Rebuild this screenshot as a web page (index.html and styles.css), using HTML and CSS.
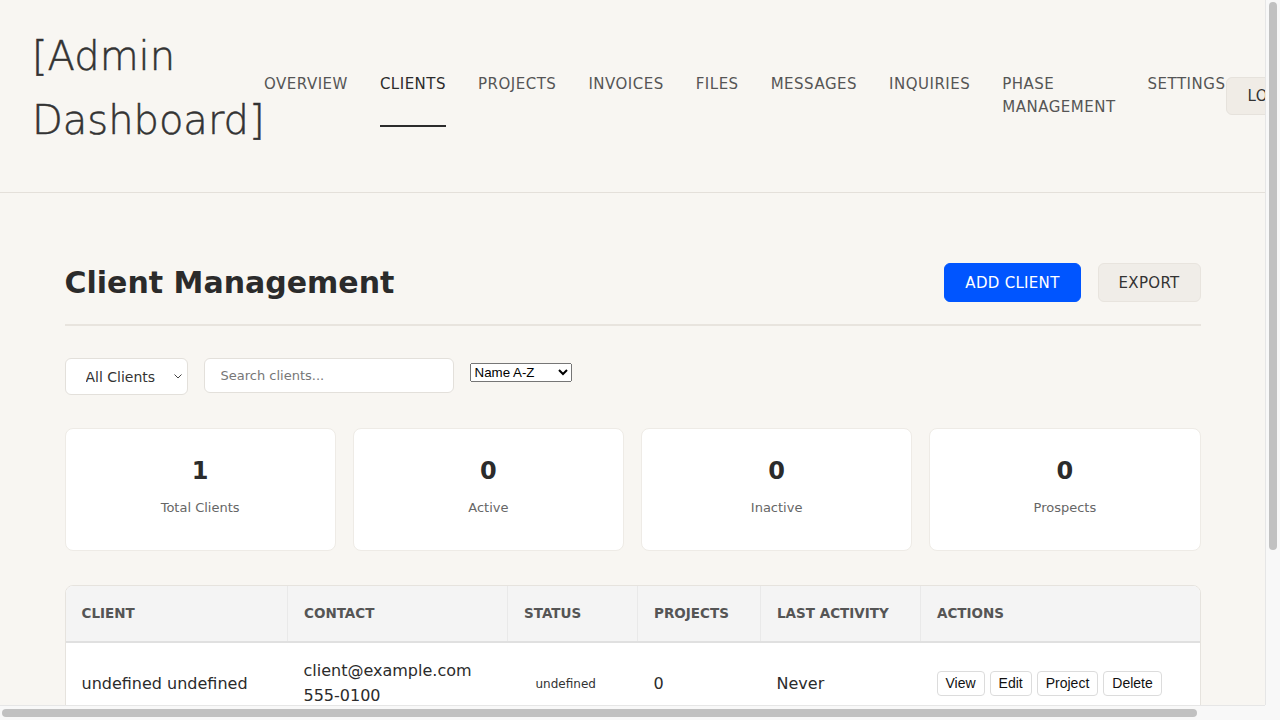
FILE: index.html
```html
<!DOCTYPE html>
<html lang="en">
<head>
<meta charset="utf-8">
<title>Admin Dashboard - Clients</title>
<link rel="stylesheet" href="styles.css">
</head>
<body>
<div class="viewport">
  <header class="site-header">
    <div class="logo">[Admin Dashboard]</div>
    <nav class="main-nav">
      <a class="nav-link" href="#">Overview</a>
      <a class="nav-link nav-link--active" href="#">Clients</a>
      <a class="nav-link" href="#">Projects</a>
      <a class="nav-link" href="#">Invoices</a>
      <a class="nav-link" href="#">Files</a>
      <a class="nav-link" href="#">Messages</a>
      <a class="nav-link" href="#">Inquiries</a>
      <a class="nav-link nav-link--wrap" href="#">Phase Management</a>
      <a class="nav-link" href="#">Settings</a>
    </nav>
    <button class="logout-btn" type="button">Logout</button>
  </header>

  <main class="page">
    <div class="page-head">
      <h1 class="page-title">Client Management</h1>
      <div class="head-actions">
        <button class="btn btn-primary" type="button">Add Client</button>
        <button class="btn btn-secondary" type="button">Export</button>
      </div>
    </div>

    <div class="filters">
      <div class="select-wrap">
        <select class="filter-select">
          <option>All Clients</option>
          <option>Active</option>
          <option>Inactive</option>
          <option>Prospects</option>
        </select>
        <svg class="select-chevron" width="8" height="5" viewBox="0 0 8 5" aria-hidden="true"><path d="M0.5 0.5 L4 4 L7.5 0.5" fill="none" stroke="#444" stroke-width="1"/></svg>
      </div>
      <input class="search-input" type="text" placeholder="Search clients...">
      <select class="sort-select">
        <option>Name A-Z</option>
        <option>Name Z-A</option>
        <option>Newest First</option>
      </select>
    </div>

    <div class="stats">
      <div class="stat-card"><div class="stat-value">1</div><div class="stat-label">Total Clients</div></div>
      <div class="stat-card"><div class="stat-value">0</div><div class="stat-label">Active</div></div>
      <div class="stat-card"><div class="stat-value">0</div><div class="stat-label">Inactive</div></div>
      <div class="stat-card"><div class="stat-value">0</div><div class="stat-label">Prospects</div></div>
    </div>

    <div class="table-wrap">
      <table class="clients-table">
        <colgroup>
          <col class="col-client">
          <col class="col-contact">
          <col class="col-status">
          <col class="col-projects">
          <col class="col-activity">
          <col class="col-actions">
        </colgroup>
        <thead>
          <tr>
            <th>Client</th>
            <th>Contact</th>
            <th>Status</th>
            <th>Projects</th>
            <th>Last Activity</th>
            <th>Actions</th>
          </tr>
        </thead>
        <tbody>
          <tr>
            <td class="cell-name">undefined undefined</td>
            <td class="cell-contact">client@example.com<br>555-0100</td>
            <td><span class="status-badge">undefined</span></td>
            <td class="cell-muted">0</td>
            <td class="cell-muted">Never</td>
            <td>
              <div class="row-actions">
                <button class="action-btn" type="button">View</button>
                <button class="action-btn" type="button">Edit</button>
                <button class="action-btn" type="button">Project</button>
                <button class="action-btn" type="button">Delete</button>
              </div>
            </td>
          </tr>
        </tbody>
      </table>
    </div>
  </main>
</div>
<div class="vscroll"><div class="vscroll-thumb"></div></div>
<div class="hscroll"><div class="hscroll-thumb"></div></div>
<div class="scroll-corner"></div>
</body>
</html>
```

FILE: styles.css
```css
html {
  overflow: hidden;
}

body {
  margin: 0;
  height: 100vh;
  display: grid;
  grid-template-columns: 1fr 15px;
  grid-template-rows: 1fr 15px;
  overflow: hidden;
  background: #f8f6f2;
  font-family: "DejaVu Sans", sans-serif;
  color: #333;
}

.viewport {
  min-width: 0;
  min-height: 0;
  overflow: hidden;
}

/* Scrollbars */
.vscroll {
  box-sizing: border-box;
  padding: 2px 0 0 3px;
  background: #f8f8f8;
  border-left: 1px solid #e6e6e6;
}

.vscroll-thumb {
  width: 8px;
  height: 548px;
  border-radius: 4px;
  background: #c1c1c1;
}

.hscroll {
  box-sizing: border-box;
  padding: 3px 0 0 2px;
  background: #f8f8f8;
  border-top: 1px solid #e6e6e6;
}

.hscroll-thumb {
  width: 1195px;
  height: 8px;
  border-radius: 4px;
  background: #c1c1c1;
}

.scroll-corner {
  background: #f8f8f8;
}

/* Header */
.site-header {
  display: flex;
  align-items: flex-start;
  width: max-content;
  min-width: 100%;
  box-sizing: border-box;
  height: 193px;
  padding: 24px 0 0 32px;
  border-bottom: 1px solid #e4e0da;
}

.logo {
  width: 232px;
  font-size: 40px;
  font-weight: 200;
  line-height: 64px;
  color: #333;
  -webkit-text-stroke: 0.5px #333;
}

.main-nav {
  display: flex;
  gap: 32px;
  margin-top: 49px;
  margin-right: 1px;
}

.nav-link {
  font-size: 15px;
  line-height: 23px;
  letter-spacing: 0.5px;
  text-transform: uppercase;
  color: #555;
  text-decoration: none;
  white-space: nowrap;
}

.nav-link--active {
  color: #2b2b2b;
  padding-bottom: 29px;
  border-bottom: 2px solid #2b2b2b;
}

.nav-link--wrap {
  white-space: normal;
  width: min-content;
}

.logout-btn {
  margin-top: 53px;
  height: 38px;
  padding: 0 20px;
  background: #f0ece6;
  border: 1px solid #e6e2dc;
  border-radius: 6px;
  font-family: inherit;
  font-size: 15px;
  letter-spacing: 0.5px;
  text-transform: uppercase;
  color: #333;
}

/* Page */
.page {
  max-width: 1200px;
  margin: 0 auto;
  padding: 70px 32px 180px;
  box-sizing: border-box;
}

.page-head {
  display: flex;
  justify-content: space-between;
  align-items: center;
  padding-bottom: 22px;
  border-bottom: 2px solid #e8e4de;
  margin-bottom: 32px;
}

.page-title {
  margin: 0;
  font-size: 30px;
  font-weight: 700;
  line-height: 39px;
  color: #2b2b2b;
}

.head-actions {
  display: flex;
  gap: 17px;
}

.btn {
  height: 39px;
  padding: 0 20px;
  border-radius: 6px;
  font-family: inherit;
  font-size: 15px;
  letter-spacing: 0.3px;
  text-transform: uppercase;
}

.btn-primary {
  background: #0055ff;
  border: 1px solid #0055ff;
  color: #fff;
}

.btn-secondary {
  background: #f0ede8;
  border: 1px solid #e8e4de;
  color: #333;
}

/* Filters */
.filters {
  display: flex;
  align-items: flex-start;
  gap: 16px;
  height: 36px;
  margin-bottom: 34px;
}

.select-wrap {
  position: relative;
  display: flex;
}

.filter-select {
  appearance: none;
  -webkit-appearance: none;
  width: 123px;
  height: 37px;
  padding: 0 20px 0 20px;
  background: #fff;
  border: 1px solid #e3e0db;
  border-radius: 6px;
  font-family: inherit;
  font-size: 14px;
  color: #333;
}

.select-chevron {
  position: absolute;
  right: 6px;
  top: 16px;
  pointer-events: none;
}

.search-input {
  width: 250px;
  height: 35px;
  box-sizing: border-box;
  padding: 0 16px;
  background: #fff;
  border: 1px solid #e3e0db;
  border-radius: 6px;
  font-family: inherit;
  font-size: 13px;
  color: #333;
}

.search-input::placeholder {
  color: #777;
}

.sort-select {
  margin-top: 5px;
  width: 102px;
  font-family: "Liberation Sans", Arial, sans-serif;
  font-size: 13.33px;
}

/* Stats */
.stats {
  display: grid;
  grid-template-columns: repeat(4, 1fr);
  gap: 17px;
  margin-bottom: 34px;
}

.stat-card {
  background: #fff;
  border: 1px solid #eeebe6;
  border-radius: 8px;
  padding: 27px 24px 32px;
  text-align: center;
}

.stat-value {
  font-size: 24px;
  font-weight: 700;
  line-height: 30px;
  color: #2b2b2b;
}

.stat-label {
  margin-top: 12px;
  font-size: 13px;
  line-height: 20px;
  color: #666;
}

/* Table */
.table-wrap {
  background: #fff;
  border: 1px solid #e6e3de;
  border-radius: 8px;
  overflow: hidden;
}

.clients-table {
  width: 100%;
  border-collapse: collapse;
  table-layout: fixed;
}

.col-client { width: 222px; }
.col-contact { width: 220px; }
.col-status { width: 130px; }
.col-projects { width: 123px; }
.col-activity { width: 160px; }

.clients-table th {
  padding: 17px 16px 18px;
  background: #f4f4f4;
  border-right: 1px solid #e9e9e9;
  border-bottom: 2px solid #e0e0e0;
  font-size: 13.5px;
  font-weight: 700;
  line-height: 20px;
  text-align: left;
  text-transform: uppercase;
  color: #555;
}

.clients-table th:last-child {
  border-right: none;
}

.clients-table td {
  padding: 15px 16px;
  font-size: 16px;
  line-height: 25px;
  vertical-align: middle;
  color: #2b2b2b;
  border-bottom: 1px solid #eeeeee;
}

.cell-muted {
  color: #555;
}

.status-badge {
  display: inline-block;
  padding: 4px 12px;
  font-size: 12px;
  line-height: 16px;
  color: #333;
}

.row-actions {
  display: flex;
  gap: 5px;
}

.action-btn {
  height: 25px;
  padding: 0 8px;
  background: #fff;
  border: 1px solid #dcdcdc;
  border-radius: 4px;
  font-family: "Liberation Sans", Arial, sans-serif;
  font-size: 14px;
  color: #111;
}
```
